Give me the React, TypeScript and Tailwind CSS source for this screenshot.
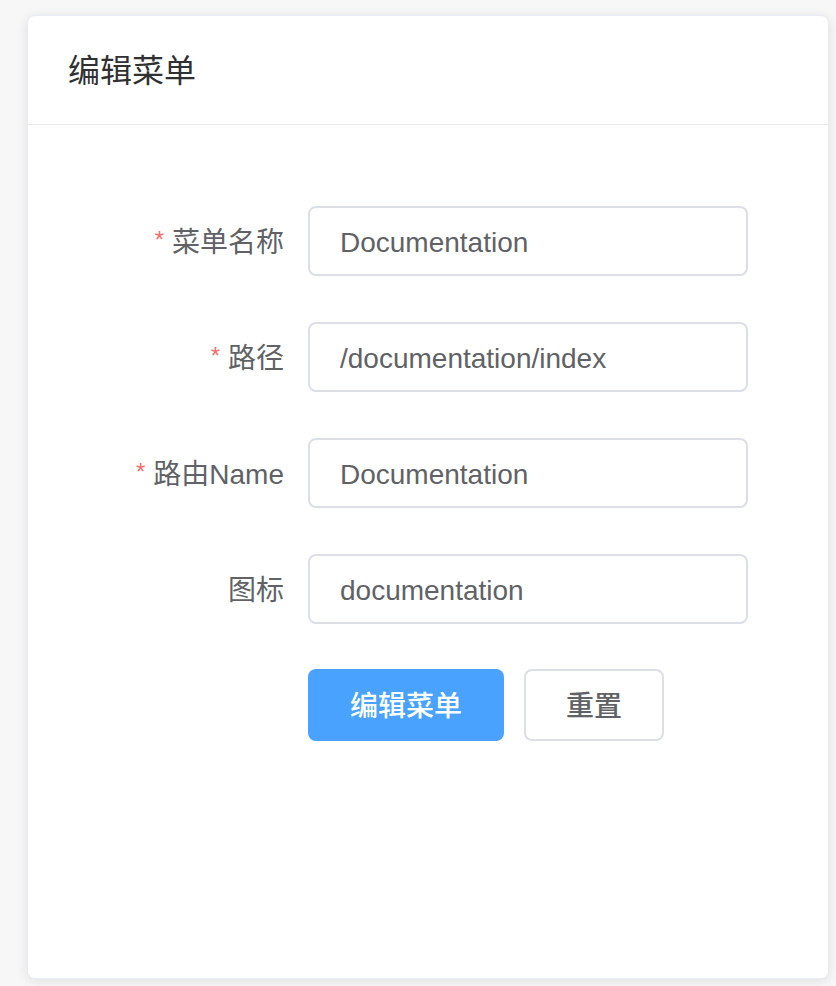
import React from "react";

// form rows
const fields = [
    { label: "菜单名称", value: "Documentation", required: true },
    { label: "路径", value: "/documentation/index", required: true },
    { label: "路由Name", value: "Documentation", required: true },
    { label: "图标", value: "documentation", required: false },
];

const FormRow = ({ label, value, required }: { label: string; value: string; required: boolean }) => {
    return (
        <div className="flex items-center mb-[46px]">
            <label className="w-[240px] pr-6 pt-[3px] text-right text-[28px] text-[#606266] leading-none">
                {required ? <span className="text-[#f56c6c] text-[24px] mr-[8px] align-[4px]">*</span> : null}
                {label}
            </label>
            <input
                readOnly
                value={value}
                className="w-[440px] h-[70px] border-2 border-[#dcdfe6] rounded-lg pl-[30px] pt-[4px] text-[28px] text-[#606266] outline-none bg-white"
            />
        </div>
    );
};

const App = () => {
    return (
        <div
            className="min-h-[986px] w-[836px] bg-[#f7f7f8] pt-[15px] pl-[27px]"
            style={{ fontFamily: '"Liberation Sans", "Noto Sans CJK SC", sans-serif' }}
        >
            {/* Card */}
            <div className="w-[802px] h-[964px] bg-white border border-[#e9ecf2] rounded-lg shadow-[0_2px_12px_0_rgba(0,0,0,0.1)] overflow-hidden">
                {/* Header */}
                <div className="h-[109px] px-10 flex items-center border-b border-[#e6e9f0]">
                    <h2 className="text-[32px] text-[#303133] font-normal pt-[2px]">编辑菜单</h2>
                </div>

                {/* Body */}
                <div className="px-10 pt-[81px]">
                    {fields.map((f, index) => (
                        <FormRow key={index} {...f} />
                    ))}
                    <div className="flex gap-5 pl-[240px] -mt-px">
                        <button className="w-[196px] h-[72px] pt-[4px] rounded-lg bg-[#48a2fe] text-white text-[28px] font-medium">
                            编辑菜单
                        </button>
                        <button className="w-[140px] h-[72px] pt-[4px] rounded-lg border-2 border-[#dcdfe6] bg-white text-[#606266] text-[28px] font-medium">
                            重置
                        </button>
                    </div>
                </div>
            </div>
        </div>
    );
};

export default App;
